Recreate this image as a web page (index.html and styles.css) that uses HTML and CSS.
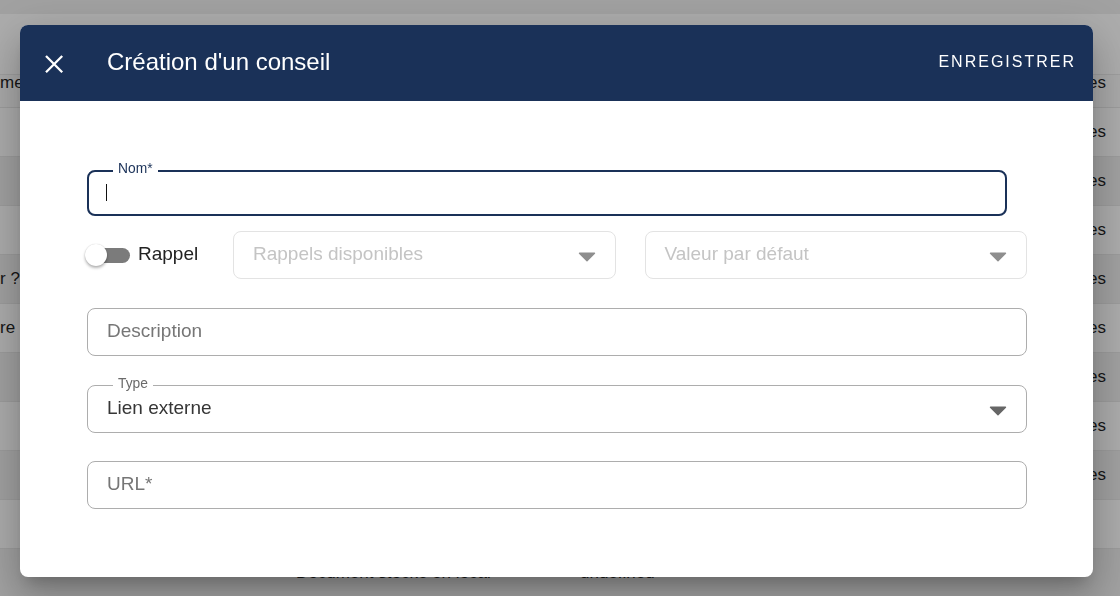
FILE: index.html
```html
<!DOCTYPE html>
<html lang="fr">
<head>
<meta charset="utf-8">
<title>Création d'un conseil</title>
<link rel="stylesheet" href="styles.css">
</head>
<body>
<div class="page">
  <div class="topbar"></div>
  <div class="spacer"></div>
  <div class="row head"><div class="c-left">me</div><div class="c-mid"></div><div class="c-right">Types</div></div>
  <div class="row"><div class="c-left"></div><div class="c-mid"></div><div class="c-right">Toutes</div></div>
  <div class="row dark"><div class="c-left"></div><div class="c-mid"></div><div class="c-right">Toutes</div></div>
  <div class="row"><div class="c-left"></div><div class="c-mid"></div><div class="c-right">Toutes</div></div>
  <div class="row dark"><div class="c-left">r ?</div><div class="c-mid"></div><div class="c-right">Toutes</div></div>
  <div class="row"><div class="c-left">re p</div><div class="c-mid"></div><div class="c-right">Toutes</div></div>
  <div class="row dark"><div class="c-left"></div><div class="c-mid"></div><div class="c-right">Toutes</div></div>
  <div class="row"><div class="c-left"></div><div class="c-mid"></div><div class="c-right">Toutes</div></div>
  <div class="row dark"><div class="c-left"></div><div class="c-mid"></div><div class="c-right">Toutes</div></div>
  <div class="row"><div class="c-left"></div><div class="c-mid"></div><div class="c-right"></div></div>
  <div class="row dark"><div class="c-left"></div><div class="c-mid"><span class="doc">Document stocké en local</span><span>undefined</span></div><div class="c-right"></div></div>
</div>

<div class="dialog" role="dialog" aria-labelledby="dlg-title">
  <header class="dlg-head">
    <button class="close" aria-label="Fermer">
      <svg width="24" height="24" viewBox="0 0 24 24"><path d="M4 4L20.2 20.2M20.2 4L4 20.2" stroke="#fff" stroke-width="2.3" fill="none"/></svg>
    </button>
    <h1 class="title" id="dlg-title">Création d'un conseil</h1>
    <button class="save">ENREGISTRER</button>
  </header>
  <div class="dlg-body">
    <div class="field nom">
      <span class="flabel nom-label">Nom*</span>
      <span class="caret"></span>
    </div>
    <div class="row2">
      <div class="switch-wrap">
        <span class="switch"><span class="track"></span><span class="thumb"></span></span>
        <span class="switch-label">Rappel</span>
      </div>
      <div class="field select disabled">
        <span class="ph">Rappels disponibles</span>
        <svg class="arrow" width="18" height="10" viewBox="0 0 18 10"><path d="M1.5 1.2h15l-7.5 7.6z" fill="currentColor" stroke="currentColor" stroke-width="1.4" stroke-linejoin="round"/></svg>
      </div>
      <div class="field select disabled">
        <span class="ph">Valeur par défaut</span>
        <svg class="arrow" width="18" height="10" viewBox="0 0 18 10"><path d="M1.5 1.2h15l-7.5 7.6z" fill="currentColor" stroke="currentColor" stroke-width="1.4" stroke-linejoin="round"/></svg>
      </div>
    </div>
    <div class="field desc"><span class="ph gray">Description</span></div>
    <div class="field select type">
      <span class="flabel type-label">Type</span>
      <span class="val">Lien externe</span>
      <svg class="arrow" width="18" height="10" viewBox="0 0 18 10"><path d="M1.5 1.2h15l-7.5 7.6z" fill="currentColor" stroke="currentColor" stroke-width="1.4" stroke-linejoin="round"/></svg>
    </div>
    <div class="field url"><span class="ph gray">URL*</span></div>
  </div>
</div>
</body>
</html>
```

FILE: styles.css
```css
* { box-sizing: border-box; }
html, body { margin: 0; height: 100%; }
body {
  font-family: "Liberation Sans", Arial, sans-serif;
  background: #adadad;
  overflow: hidden;
}

/* background page (dimmed behind the modal) */
.page { width: 1120px; height: 596px; display: flex; flex-direction: column; overflow: hidden; }
.topbar { height: 14px; background: #a2a2a2; flex: none; }
.spacer { height: 44px; flex: none; }
.row {
  display: flex;
  align-items: center;
  height: 49px;
  flex: none;
  border-top: 1px solid #9d9d9d;
  font-size: 17px;
  color: #161616;
  background: #adadad;
}
.row.head {
  background: linear-gradient(#adadad 0 16px, #9f9f9f 16px 17px, #aaaaaa 17px);
  border-top: 0;
  padding-top: 1px;
}
.row.dark { background: #a2a2a2; }
.c-left { width: 20px; flex: none; white-space: nowrap; }
.c-mid { flex: 1; display: flex; padding-left: 276px; white-space: nowrap; }
.c-mid .doc { width: 284px; }
.c-right { width: 100px; flex: none; text-align: right; padding-right: 14px; white-space: nowrap; }

/* modal dialog */
.dialog {
  position: fixed;
  left: 20px;
  top: 25px;
  width: 1073px;
  height: 552px;
  background: #fff;
  border-radius: 8px;
  overflow: hidden;
  display: flex;
  flex-direction: column;
  box-shadow: 0 11px 15px -7px rgba(0,0,0,0.2), 0 24px 38px 3px rgba(0,0,0,0.14), 0 9px 46px 8px rgba(0,0,0,0.12);
}
.dlg-head {
  height: 76px;
  flex: none;
  background: #1a3158;
  color: #fff;
  display: flex;
  align-items: center;
  padding: 0 17px 0 21.5px;
}
.close {
  width: 24px;
  height: 24px;
  padding: 0;
  border: 0;
  background: none;
  display: flex;
  margin-top: 2px;
}
.title {
  flex: 1;
  margin: -2px 0 0 41.5px;
  font-size: 24px;
  font-weight: 400;
  line-height: 28px;
}
.save {
  background: none;
  border: 0;
  padding: 0;
  color: #fff;
  font-family: inherit;
  font-size: 16px;
  letter-spacing: 2px;
  margin-top: -3px;
}

.dlg-body {
  padding: 69px 66px 0 67px;
  display: flex;
  flex-direction: column;
}
.field {
  position: relative;
  height: 48px;
  border: 1px solid #adadad;
  border-radius: 8px;
  display: flex;
  align-items: center;
  padding: 0 19px 2px;
  font-size: 19px;
  color: #333;
  flex: none;
}
.field.nom {
  height: 46px;
  border: 2px solid #1a3158;
  margin-right: 20px;
  padding: 0 17px;
}
.caret { width: 1px; height: 17px; background: #111; margin-top: -1px; }
.flabel {
  position: absolute;
  background: #fff;
  padding: 0 5px;
  font-size: 13.8px;
  line-height: 13.5px;
}
.nom-label { top: -10px; left: 24px; color: #1a3158; }
.type-label { top: -9px; left: 25px; color: #6a6a6a; }

.row2 {
  margin-top: 15px;
  height: 48px;
  display: flex;
  align-items: center;
  gap: 29px;
}
.row2 .field { flex: 1; border-color: #e3e3e3; }
.switch-wrap { width: 117px; flex: none; display: flex; align-items: center; }
.switch { position: relative; width: 45px; height: 22px; margin-left: -2px; flex: none; display: flex; align-items: center; }
.track { width: 40px; height: 15px; margin-left: 5px; border-radius: 8px; background: #7b7b7b; }
.thumb {
  position: absolute;
  left: 0;
  top: 0;
  width: 22px;
  height: 22px;
  border-radius: 50%;
  background: #fff;
  box-shadow: 0 2px 3px rgba(0,0,0,0.3), 0 0 1px rgba(0,0,0,0.2);
}
.switch-label { margin-left: 8px; font-size: 19px; color: #222; margin-top: -3px; }

.ph { color: #767676; }
.disabled .ph { color: #c4c4c4; }
.val { color: #363636; }
.arrow { margin-left: auto; margin-top: 5px; color: #666; flex: none; }
.disabled .arrow { color: #8e8e8e; }

.desc { margin-top: 29px; }
.type { margin-top: 29px; }
.url { margin-top: 28px; }
```
